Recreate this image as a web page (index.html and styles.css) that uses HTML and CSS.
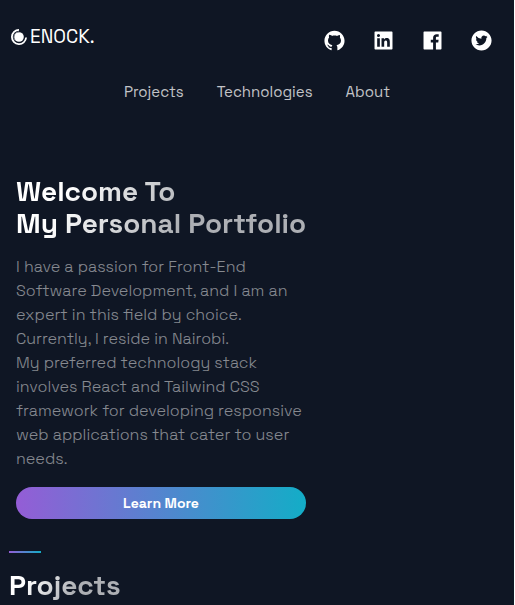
FILE: index.html
```html
<!DOCTYPE html>
<html lang="en">
<head>
<meta charset="utf-8">
<meta name="viewport" content="width=device-width, initial-scale=1">
<title>Enock</title>
<link rel="stylesheet" href="styles.css">
</head>
<body>
<div class="page">
  <header class="header">
    <div class="topbar">
      <a class="logo" href="#">
        <svg class="logo-mark" viewBox="0 0 16 16" aria-hidden="true">
          <circle cx="8" cy="8" r="4.800" fill="#fff"/>
          <path d="M8 .9A7.100 7.100 0 1 0 15.100 8.500" fill="none" stroke="#fff" stroke-width="1.800"/>
          <path d="M8 2.800A5.300 5.300 0 0 0 4 11.500" fill="none" stroke="#8b909a" stroke-width=".8"/>
        </svg>
        <span>ENOCK.</span>
      </a>
      <div class="social">
        <a href="#" aria-label="GitHub"><svg viewBox="0 0 1024 1024"><path d="M511.6 76.3C264.3 76.2 64 276.4 64 523.5 64 718.9 189.3 885 363.8 946c23.5 5.9 19.9-10.8 19.9-22.2v-77.5c-135.7 15.900-141.200-73.900-150.300-88.900C215 726 171.500 718 184.500 703c30.900-15.900 62.400 4 98.900 57.900 26.400 39.100 77.900 32.500 104 26 5.700-23.500 17.900-44.500 34.700-60.800-140.600-25.200-199.200-111-199.200-213 0-49.500 16.300-95 48.300-131.700-20.400-60.500 1.900-112.300 4.900-120 58.100-5.200 118.500 41.600 123.200 45.300 33-8.900 70.700-13.600 112.900-13.600 42.400 0 80.200 4.900 113.500 13.900 11.300-8.600 67.300-48.800 121.300-43.900 2.900 7.700 24.700 58.300 5.500 118 32.400 36.800 48.900 82.700 48.900 132.300 0 102.200-59 188.100-200 212.900a127.500 127.500 0 0 1 38.100 91v112.500c.8 9 0 17.900 15 17.900 177.100-59.700 304.600-227 304.600-424.100 0-247.200-200.400-447.300-447.500-447.300z"/></svg></a>
        <a href="#" aria-label="LinkedIn"><svg viewBox="0 0 1024 1024"><path d="M880 112H144c-17.700 0-32 14.300-32 32v736c0 17.700 14.300 32 32 32h736c17.700 0 32-14.300 32-32V144c0-17.700-14.300-32-32-32zM349.300 793.700H230.600V411.900h118.700v381.800zm-59.300-434a68.800 68.800 0 1 1 68.800-68.800c-.1 38-30.900 68.800-68.800 68.800zm503.700 434H675.100V608c0-44.300-.8-101.200-61.700-101.200-61.700 0-71.200 48.200-71.200 98v188.900H423.700V411.900h113.800v52.200h1.600c15.800-30 54.500-61.700 112.300-61.700 120.200 0 142.300 79.100 142.300 181.900v209.400z"/></svg></a>
        <a href="#" aria-label="Facebook"><svg viewBox="0 0 1024 1024"><path d="M880 112H144c-17.700 0-32 14.300-32 32v736c0 17.700 14.300 32 32 32h736c17.700 0 32-14.300 32-32V144c0-17.700-14.300-32-32-32zm-92.400 233.500h-63.900c-50.100 0-59.800 23.800-59.800 58.800v77.100h119.600l-15.600 120.700h-104V912H539.200V602.200H434.900V481.400h104.300v-89c0-103.300 63.100-159.600 155.300-159.600 44.200 0 82.100 3.300 93.200 4.800v107.900z"/></svg></a>
        <a href="#" aria-label="Twitter"><svg viewBox="0 0 1024 1024"><path d="M512 64C264.600 64 64 264.600 64 512s200.600 448 448 448 448-200.600 448-448S759.400 64 512 64zm215.300 337.700c.3 4.700.3 9.600.3 14.400 0 146.800-111.800 315.900-316.100 315.900-63 0-121.400-18.300-170.600-49.800 9 1 17.600 1.400 26.800 1.400 52 0 99.800-17.600 137.900-47.400-48.800-1-89.800-33-103.800-77 17.100 2.500 32.500 2.500 50.100-2a111 111 0 0 1-88.900-109v-1.400c14.700 8.300 32 13.400 50.100 14.100a111.130 111.130 0 0 1-49.500-92.400c0-20.700 5.400-39.600 15.100-56a315.280 315.280 0 0 0 229 116.100C492 353.100 548.400 292 616.200 292c32 0 60.800 13.400 81.100 35 25.100-4.700 49.100-14.100 70.500-26.700-8.300 25.700-25.700 47.400-48.800 61.100 22.400-2.400 44-8.600 64-17.300-15.100 22.200-34 41.900-55.700 57.600z"/></svg></a>
      </div>
    </div>
    <nav class="nav">
      <a href="#projects">Projects</a>
      <a href="#tech">Technologies</a>
      <a href="#about">About</a>
    </nav>
  </header>
  <main>
    <section class="hero">
      <h1 class="title">Welcome To<br>My Personal Portfolio</h1>
      <p class="intro">I have a passion for Front-End<br>Software Development, and I am an<br>expert in this field by choice.<br>Currently, I reside in Nairobi.<br>My preferred technology stack<br>involves React and Tailwind CSS<br>framework for developing responsive<br>web applications that cater to user<br>needs.</p>
      <button class="cta" type="button">Learn More</button>
    </section>
    <section class="projects" id="projects">
      <div class="divider"></div>
      <h2 class="title">Projects</h2>
    </section>
  </main>
</div>
</body>
</html>
```
FILE: styles.css
```css
* {
  box-sizing: border-box;
}

body {
  margin: 0;
  background: #0f1624;
  color: #fff;
  font-family: "Space Grotesk", Inter, sans-serif;
  font-size: 16px;
}

.page {
  min-height: 100vh;
  border-right: 1px solid #fff;
}

a {
  color: inherit;
  text-decoration: none;
}

.topbar {
  display: flex;
  justify-content: space-between;
  padding: 24px 21px 0 11px;
}

.logo {
  display: flex;
  align-items: center;
  gap: 3px;
  height: 26px;
  font-size: 19px;
  font-weight: 400;
  line-height: 24px;
}

.logo-mark {
  width: 16px;
  height: 16px;
}

.social {
  display: flex;
  gap: 26px;
  padding-top: 5px;
}

.social svg {
  display: block;
  width: 23px;
  height: 23px;
  fill: #fff;
}

.nav {
  display: flex;
  justify-content: center;
  gap: 33px;
  padding-top: 28px;
  color: rgba(255, 255, 255, 0.75);
  font-size: 15px;
  line-height: 24px;
}

.hero {
  padding: 71px 16px 0;
}

.title {
  width: 290px;
  margin: 0;
  background: linear-gradient(122deg, #fff 19%, rgba(255, 255, 255, 0.66) 60%);
  background-clip: text;
  -webkit-background-clip: text;
  color: transparent;
  font-size: 28px;
  font-weight: 700;
  line-height: 32px;
  white-space: nowrap;
}

.intro {
  margin: 0;
  padding: 16px 0;
  color: rgba(255, 255, 255, 0.5);
  font-weight: 300;
  line-height: 24px;
}

.cta {
  display: block;
  width: 290px;
  height: 32px;
  padding: 0;
  border: 0;
  border-radius: 16px;
  background: linear-gradient(270deg, #13adc7 0%, #945dd6 100%);
  color: #fff;
  font-family: inherit;
  font-size: 14px;
  font-weight: 600;
}

.projects {
  padding: 32px 9px 0;
}

.divider {
  width: 32px;
  height: 2px;
  margin-bottom: 16px;
  background: linear-gradient(270deg, #13adc7 0%, #945dd6 100%);
}

.projects .title {
  width: 112px;
}
```
